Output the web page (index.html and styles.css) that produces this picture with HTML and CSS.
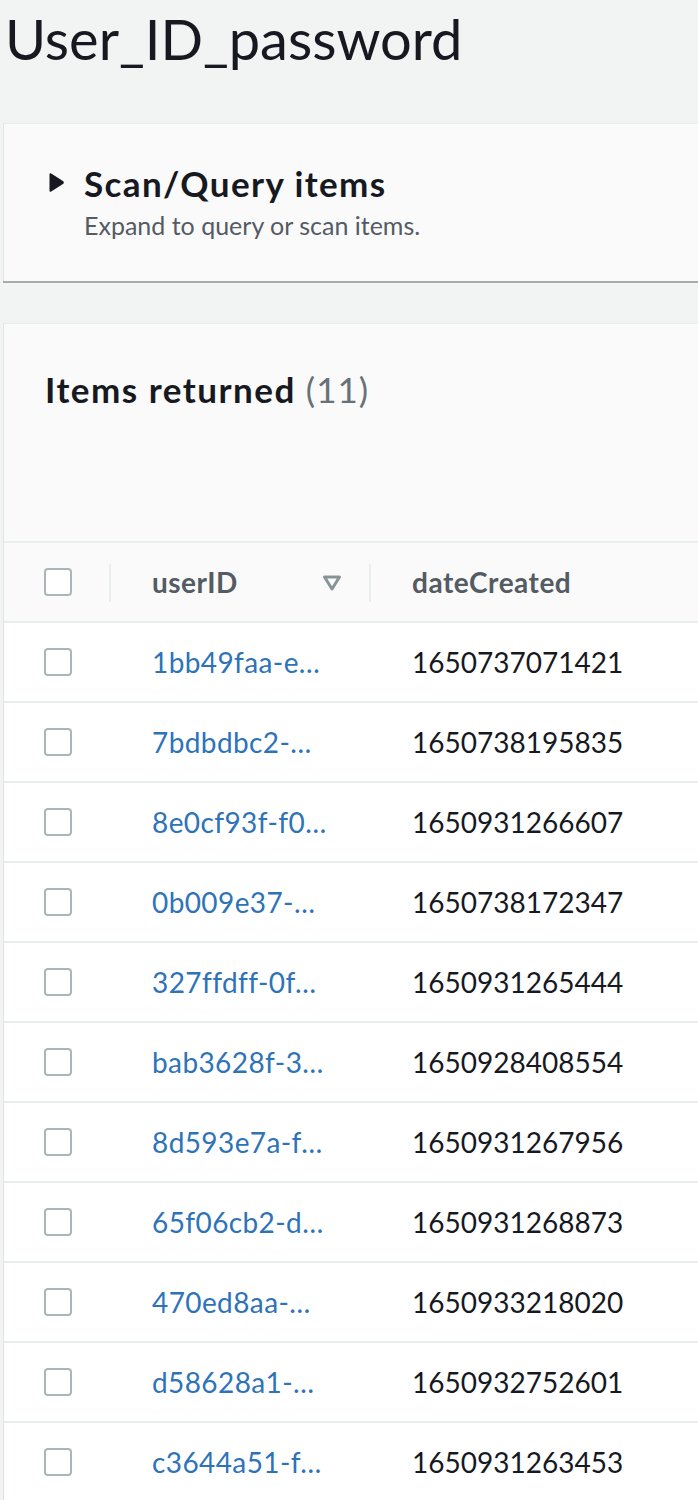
FILE: index.html
```html
<!DOCTYPE html>
<html lang="en">
<head>
<meta charset="utf-8">
<title>User_ID_password</title>
<link rel="stylesheet" href="styles.css">
</head>
<body>
<h1 class="page-title">User_ID_password</h1>

<section class="card scan-card">
  <div class="expander">
    <svg class="caret" width="17" height="21" viewBox="0 0 17 21"><path d="M1.5 2.5 Q1.5 0.6 3.2 1.6 L15.3 9.2 Q16.6 10.5 15.3 11.8 L3.2 19.4 Q1.5 20.4 1.5 18.5 Z" fill="#16191f"/></svg>
    <div class="expander-text">
      <h2 class="expander-title">Scan/Query items</h2>
      <p class="expander-desc">Expand to query or scan items.</p>
    </div>
  </div>
</section>

<section class="card items-card">
  <h2 class="items-title">Items returned <span class="count">(11)</span></h2>
  <div class="table">
    <div class="row head">
      <div class="cell check"><span class="box"></span><span class="divider"></span></div>
      <div class="cell col-id">userID
        <svg class="sort" width="20" height="16" viewBox="0 0 20 16"><path d="M2.5 2 H17.5 L10 14 Z" fill="none" stroke="#879596" stroke-width="3" stroke-linejoin="round"/></svg>
        <span class="divider"></span>
      </div>
      <div class="cell col-date">dateCreated</div>
    </div>
    <div class="row"><div class="cell check"><span class="box"></span></div><div class="cell col-id"><a class="link">1bb49faa-e…</a></div><div class="cell col-date">1650737071421</div></div>
    <div class="row"><div class="cell check"><span class="box"></span></div><div class="cell col-id"><a class="link">7bdbdbc2-…</a></div><div class="cell col-date">1650738195835</div></div>
    <div class="row"><div class="cell check"><span class="box"></span></div><div class="cell col-id"><a class="link">8e0cf93f-f0…</a></div><div class="cell col-date">1650931266607</div></div>
    <div class="row"><div class="cell check"><span class="box"></span></div><div class="cell col-id"><a class="link">0b009e37-…</a></div><div class="cell col-date">1650738172347</div></div>
    <div class="row"><div class="cell check"><span class="box"></span></div><div class="cell col-id"><a class="link">327ffdff-0f…</a></div><div class="cell col-date">1650931265444</div></div>
    <div class="row"><div class="cell check"><span class="box"></span></div><div class="cell col-id"><a class="link">bab3628f-3…</a></div><div class="cell col-date">1650928408554</div></div>
    <div class="row"><div class="cell check"><span class="box"></span></div><div class="cell col-id"><a class="link">8d593e7a-f…</a></div><div class="cell col-date">1650931267956</div></div>
    <div class="row"><div class="cell check"><span class="box"></span></div><div class="cell col-id"><a class="link">65f06cb2-d…</a></div><div class="cell col-date">1650931268873</div></div>
    <div class="row"><div class="cell check"><span class="box"></span></div><div class="cell col-id"><a class="link">470ed8aa-…</a></div><div class="cell col-date">1650933218020</div></div>
    <div class="row"><div class="cell check"><span class="box"></span></div><div class="cell col-id"><a class="link">d58628a1-…</a></div><div class="cell col-date">1650932752601</div></div>
    <div class="row"><div class="cell check"><span class="box"></span></div><div class="cell col-id"><a class="link">c3644a51-f…</a></div><div class="cell col-date">1650931263453</div></div>
  </div>
</section>
</body>
</html>
```

FILE: styles.css
```css
html, body {
  margin: 0;
  padding: 0;
}
body {
  background: #f2f3f3;
  font-family: Lato, "Open Sans", sans-serif;
  color: #16191f;
  overflow-x: hidden;
  width: 698px;
}
.page-title {
  margin: 0;
  padding: 0 0 0 5px;
  font-size: 56px;
  font-weight: 400;
  line-height: 78px;
  color: #16191f;
}
.card {
  margin-left: 3px;
  margin-right: -20px;
  background: #fafafa;
  border-left: 1px solid #dfe3e3;
  border-top: 1px solid #eaeded;
}
.scan-card {
  margin-top: 45px;
  height: 158px;
  box-sizing: border-box;
  box-shadow: 0 2px 0 #a5acac;
  padding-top: 44px;
}
.expander {
  display: flex;
  align-items: flex-start;
  padding-left: 44px;
}
.caret {
  margin-top: 4px;
  margin-right: 19px;
  flex: none;
}
.expander-title {
  margin: 0;
  font-size: 35px;
  font-weight: 700;
  letter-spacing: 1.4px;
  line-height: 30px;
}
.expander-desc {
  margin: 12px 0 0 0;
  font-size: 25px;
  line-height: 30px;
  color: #545b64;
}
.items-card {
  margin-top: 42px;
  padding-top: 1px;
}
.items-title {
  margin: 44px 0 0 0;
  padding-left: 41px;
  font-size: 35px;
  font-weight: 700;
  letter-spacing: 1.5px;
  line-height: 40px;
  height: 172px;
}
.count {
  font-weight: 400;
  letter-spacing: 1px;
  color: #687078;
}
.table {
  border-top: 2px solid #eaeded;
}
.row {
  display: grid;
  grid-template-columns: 107px 260px 1fr;
  height: 78px;
  border-bottom: 2px solid #eaeded;
  background: #fff;
  font-size: 28px;
}
.row.head {
  background: #fafafa;
  font-weight: 700;
  color: #545b64;
  letter-spacing: 0.5px;
}
.cell {
  display: flex;
  align-items: center;
  position: relative;
}
.check {
  padding-left: 40px;
}
.col-id {
  padding-left: 41px;
}
.col-date {
  padding-left: 41px;
  color: #16191f;
}
.head .col-date {
  color: #545b64;
}
.box {
  width: 28px;
  height: 28px;
  box-sizing: border-box;
  border: 2px solid #aab7b8;
  border-radius: 4px;
  background: #fff;
}
.divider {
  position: absolute;
  right: 0;
  top: 21px;
  width: 2px;
  height: 38px;
  background: #eaeded;
}
.sort {
  position: absolute;
  left: 211px;
  top: 32px;
}
.link {
  color: #2e73b8;
  text-decoration: none;
  letter-spacing: 0.4px;
}
```
